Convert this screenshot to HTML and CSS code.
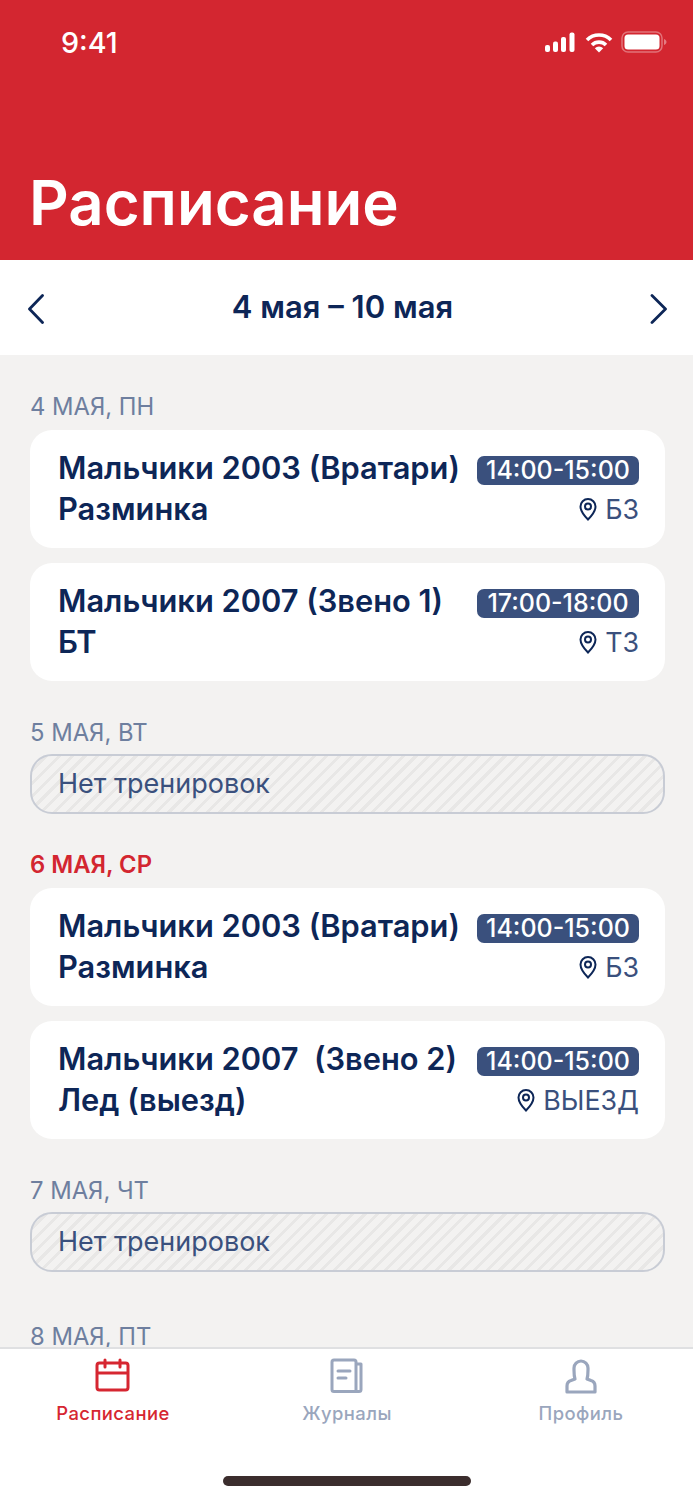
FILE: index.html
```html
<!DOCTYPE html>
<html lang="ru">
<head>
    <meta charset="UTF-8">
    <meta name="viewport" content="width=device-width, initial-scale=1.0">
    <title>Расписание</title>
    <link rel="stylesheet" href="styles.css">
</head>
<body>
    <div class="app">
        <header class="top">
            <div class="status">
                <span class="clock">9:41</span>
                <div class="status-icons">
                    <svg width="33" height="20" viewBox="0 0 33 20"><g fill="#fff"><rect x="1" y="13" width="5" height="7" rx="2"/><rect x="9" y="9.500" width="5" height="10.500" rx="2"/><rect x="17" y="5" width="5" height="15" rx="2"/><rect x="25.500" y="0.500" width="5" height="19.500" rx="2"/></g></svg>
                    <svg width="28" height="21" viewBox="0 0 28 21"><g fill="none" stroke="#fff" stroke-width="3.600"><path d="M2 8a17 17 0 0 1 24 0"/><path d="M7 13a10 10 0 0 1 14 0"/></g><path d="M9.800 16.200a6 6 0 0 1 8.400 0L14 20.500z" fill="#fff"/></svg>
                    <svg width="46" height="22" viewBox="0 0 46 22"><rect x="1" y="1" width="40" height="20" rx="6" fill="none" stroke="#fff" stroke-opacity="0.350" stroke-width="1.500"/><rect x="3.500" y="3.500" width="35" height="15" rx="3.500" fill="#fff"/><path d="M43 8v6c1.500-.5 2.500-1.700 2.500-3S44.500 8.500 43 8z" fill="#fff" fill-opacity="0.400"/></svg>
                </div>
            </div>
            <h1>Расписание</h1>
        </header>

        <div class="week">
            <svg width="18" height="30" viewBox="0 0 18 30"><path d="M14.500 1.500 1.500 15l13 13.500" fill="none" stroke="#0d2657" stroke-width="2.800" stroke-linecap="round" stroke-linejoin="round"/></svg>
            <span class="week-title">4 мая – 10 мая</span>
            <svg width="18" height="30" viewBox="0 0 18 30"><path d="M2 1.500 15.500 15 2 28.500" fill="none" stroke="#0d2657" stroke-width="2.800" stroke-linecap="round" stroke-linejoin="round"/></svg>
        </div>

        <main class="days">
            <section class="day">
                <div class="day-label">4 мая, пн</div>
                <div class="card">
                    <div class="card-text">Мальчики 2003 (Вратари)<br>Разминка</div>
                    <div class="card-side">
                        <span class="time">14:00-15:00</span>
                        <span class="place"><svg class="pin" width="18" height="24" viewBox="0 0 18 24"><path d="M9 22.500C4.500 18 1.500 14 1.500 9.500a7.500 7.500 0 0 1 15 0C16.500 14 13.500 18 9 22.500z" fill="none" stroke="#0d2657" stroke-width="2"/><circle cx="9" cy="9.500" r="3" fill="none" stroke="#0d2657" stroke-width="2"/></svg>БЗ</span>
                    </div>
                </div>
                <div class="card">
                    <div class="card-text">Мальчики 2007 (Звено 1)<br>БТ</div>
                    <div class="card-side">
                        <span class="time">17:00-18:00</span>
                        <span class="place"><svg class="pin" width="18" height="24" viewBox="0 0 18 24"><path d="M9 22.500C4.500 18 1.500 14 1.500 9.500a7.500 7.500 0 0 1 15 0C16.500 14 13.500 18 9 22.500z" fill="none" stroke="#0d2657" stroke-width="2"/><circle cx="9" cy="9.500" r="3" fill="none" stroke="#0d2657" stroke-width="2"/></svg>ТЗ</span>
                    </div>
                </div>
            </section>

            <section class="day">
                <div class="day-label">5 мая, вт</div>
                <div class="empty">Нет тренировок</div>
            </section>

            <section class="day">
                <div class="day-label today">6 мая, ср</div>
                <div class="card">
                    <div class="card-text">Мальчики 2003 (Вратари)<br>Разминка</div>
                    <div class="card-side">
                        <span class="time">14:00-15:00</span>
                        <span class="place"><svg class="pin" width="18" height="24" viewBox="0 0 18 24"><path d="M9 22.500C4.500 18 1.500 14 1.500 9.500a7.500 7.500 0 0 1 15 0C16.500 14 13.500 18 9 22.500z" fill="none" stroke="#0d2657" stroke-width="2"/><circle cx="9" cy="9.500" r="3" fill="none" stroke="#0d2657" stroke-width="2"/></svg>БЗ</span>
                    </div>
                </div>
                <div class="card">
                    <div class="card-text">Мальчики 2007&nbsp; (Звено 2)<br>Лед (выезд)</div>
                    <div class="card-side">
                        <span class="time">14:00-15:00</span>
                        <span class="place"><svg class="pin" width="18" height="24" viewBox="0 0 18 24"><path d="M9 22.500C4.500 18 1.500 14 1.500 9.500a7.500 7.500 0 0 1 15 0C16.500 14 13.500 18 9 22.500z" fill="none" stroke="#0d2657" stroke-width="2"/><circle cx="9" cy="9.500" r="3" fill="none" stroke="#0d2657" stroke-width="2"/></svg>ВЫЕЗД</span>
                    </div>
                </div>
            </section>

            <section class="day">
                <div class="day-label">7 мая, чт</div>
                <div class="empty">Нет тренировок</div>
            </section>

            <section class="day day-next">
                <div class="day-label">8 мая, пт</div>
            </section>
        </main>

        <nav class="tabs">
            <div class="tab active">
                <svg width="36" height="36" viewBox="0 0 36 36"><g fill="none" stroke="#d62631" stroke-width="3"><rect x="2" y="5" width="31" height="27" rx="2.500"/><path d="M2 15h31"/><path d="M10 2v7M25 2v7" stroke-linecap="round"/></g></svg>
                <span>Расписание</span>
            </div>
            <div class="tab">
                <svg width="36" height="36" viewBox="0 0 36 36"><g fill="none" stroke="#9aa6bd" stroke-width="3" stroke-linejoin="round"><path d="M27 33.500H5a2 2 0 0 1-2-2V4a2 2 0 0 1 2-2h20a2 2 0 0 1 2 2z"/><path d="M27 6h5v25.500a2 2 0 0 1-2 2h-3"/><path d="M9 13h12M9 20h8" stroke-linecap="round"/></g></svg>
                <span>Журналы</span>
            </div>
            <div class="tab">
                <svg width="36" height="36" viewBox="0 0 36 36"><path d="M12 21C11 18 11 15 11 12V10a7 7 0 0 1 14 0v2c0 3 0 6-1 9l4 1.500c3 1 4 2.500 4 5.500v6H4v-6c0-3 1-4.500 4-5.500z" fill="none" stroke="#9aa6bd" stroke-width="3.200" stroke-linejoin="round"/></svg>
                <span>Профиль</span>
            </div>
            <div class="home-bar"></div>
        </nav>
    </div>
</body>
</html>
```
FILE: styles.css
```css
* {
    box-sizing: border-box;
}

body {
    margin: 0;
    font-family: Inter, "Liberation Sans", sans-serif;
    background-color: #f3f2f1;
}

.app {
    display: flex;
    flex-direction: column;
    height: 1500px;
    overflow: hidden;
}

.top {
    height: 260px;
    flex-shrink: 0;
    background-color: #d32630;
    color: #fff;
    padding: 23px 26px 0 29px;
}

.status {
    display: flex;
    justify-content: space-between;
    align-items: center;
    height: 38px;
    padding-left: 32px;
}

.clock {
    font-size: 28.7px;
    font-weight: 500;
}

.status-icons {
    display: flex;
    align-items: center;
    gap: 8px;
}

h1 {
    margin: 106px 0 0;
    font-size: 61.7px;
    line-height: 72px;
    font-weight: 600;
}

.week {
    height: 95px;
    flex-shrink: 0;
    background-color: #fff;
    display: flex;
    justify-content: space-between;
    align-items: center;
    padding: 2px 25px 0 28px;
}

.week-title {
    color: #0d2657;
    font-size: 31px;
    font-weight: 600;
    margin: -4px 11px 0 0;
}

.days {
    flex: 1;
    min-height: 0;
    overflow: hidden;
    padding: 40px 28px 0 30px;
}

.day {
    margin-bottom: 40px;
}

.day-next {
    margin-top: 54px;
}

.day-label {
    color: #6e7f9f;
    font-size: 23.8px;
    line-height: 24px;
    text-transform: uppercase;
    margin-bottom: 11px;
}

.day-label.today {
    color: #d32630;
    font-weight: 600;
}

.card {
    display: flex;
    justify-content: space-between;
    height: 118px;
    background-color: #fff;
    border-radius: 22px;
    padding: 17px 26px 0 28px;
    margin-bottom: 15px;
}

.card:last-child {
    margin-bottom: 0;
}

.card-text {
    color: #0d2657;
    font-size: 30.8px;
    line-height: 41px;
    font-weight: 600;
    white-space: nowrap;
}

.card-side {
    display: flex;
    flex-direction: column;
    align-items: flex-end;
    padding-top: 9px;
}

.time {
    min-width: 162px;
    text-align: center;
    background-color: #3a507d;
    color: #fff;
    font-size: 25px;
    line-height: 29px;
    font-weight: 500;
    border-radius: 7px;
}

.place {
    display: flex;
    align-items: center;
    gap: 8px;
    color: #3a507d;
    font-size: 26.8px;
    line-height: 36px;
    margin-top: 6px;
}

.empty {
    height: 60px;
    margin: -2px 0 -1px;
    border: 2px solid #c8ccd5;
    border-radius: 22px;
    padding-left: 26px;
    color: #3a507d;
    font-size: 27px;
    line-height: 56px;
    background-color: #f3f2f1;
    background-image: repeating-linear-gradient(135deg, #e8e7e6 0, #e8e7e6 3px, #f3f2f1 3px, #f3f2f1 9px);
}

.tabs {
    position: relative;
    height: 153px;
    flex-shrink: 0;
    background-color: #fff;
    border-top: 2px solid #dfe0e2;
    display: grid;
    grid-template-columns: repeat(3, 226px);
    column-gap: 8px;
    padding-top: 9px;
}

.tab {
    display: flex;
    flex-direction: column;
    align-items: center;
    height: 70px;
    color: #9aa6bd;
    font-size: 18.4px;
    letter-spacing: 0.45px;
    font-weight: 500;
}

.tab svg {
    margin-bottom: 8px;
}

.tab.active {
    color: #d62631;
}

.home-bar {
    position: absolute;
    left: 223px;
    bottom: 14px;
    width: 248px;
    height: 10px;
    border-radius: 5px;
    background-color: #3b2d2d;
}
```
